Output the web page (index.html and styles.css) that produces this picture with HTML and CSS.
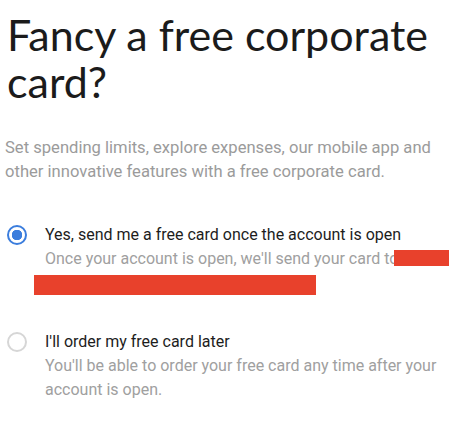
FILE: index.html
```html
<!DOCTYPE html>
<html lang="en">
<head>
  <meta charset="UTF-8" />
  <title>Corporate card</title>
  <link rel="stylesheet" href="styles.css">
</head>
<body>
  <div class="page">
    <h1 class="title">Fancy a free corporate card?</h1>
    <p class="intro">Set spending limits, explore expenses, our mobile app and other innovative features with a free corporate card.</p>

    <div class="option">
      <span class="radio checked"></span>
      <div class="option-text">
        <div class="label">Yes, send me a free card once the account is open</div>
        <div class="hint">Once your account is open, we'll send your card to<span class="redact redact-a"></span></div>
        <div class="redact redact-b"></div>
      </div>
    </div>

    <div class="option second">
      <span class="radio"></span>
      <div class="option-text">
        <div class="label">I'll order my free card later</div>
        <div class="hint">You'll be able to order your free card any time after your account is open.</div>
      </div>
    </div>
  </div>
</body>
</html>
```

FILE: styles.css
```css
body {
  margin: 0;
  background: #fff;
  font-family: Roboto, "Liberation Sans", sans-serif;
}
.page {
  padding: 11px 5px 0 5px;
}
.title {
  font-family: Lato, "DejaVu Sans", sans-serif;
  font-weight: 400;
  font-size: 43px;
  line-height: 47px;
  color: #1b1b1b;
  margin: 0 0 0 2px;
}
.intro {
  max-width: 430px;
  font-size: 16.6px;
  line-height: 24px;
  color: #9b9b9b;
  margin: 31px 0 39px 0;
}
.option {
  display: flex;
  align-items: flex-start;
}
.option.second {
  margin-top: 35px;
}
.radio {
  flex: none;
  width: 16px;
  height: 16px;
  border: 2px solid #d6d6d6;
  border-radius: 50%;
  margin: 2px 18px 0 2px;
  box-sizing: content-box;
}
.radio.checked {
  border-color: #3b7ddd;
  background: radial-gradient(circle, #3b7ddd 0 5px, #fff 5.5px);
}
.label {
  font-size: 16px;
  line-height: 24px;
  color: #1d1d1d;
}
.hint {
  font-size: 16px;
  line-height: 24px;
  color: #a0a0a0;
}
.redact {
  background: #e8412c;
}
.redact-a {
  display: inline-block;
  width: 55px;
  height: 16px;
  vertical-align: -2px;
  margin-left: -4px;
}
.redact-b {
  width: 282px;
  height: 20px;
  margin: 4px 0 0 -11px;
}
```
